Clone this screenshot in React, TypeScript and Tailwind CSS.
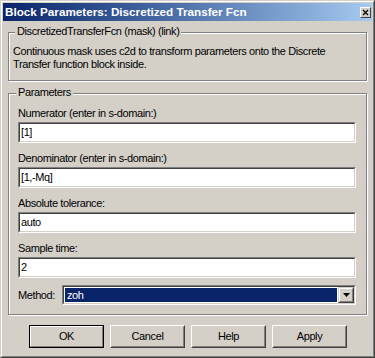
import React from "react";

function Field({ label, value }: { label: string; value: string }) {
  return (
    <div className="flex flex-col">
      <div className="h-[13px] leading-[13px] whitespace-nowrap">{label}</div>
      <div className="mt-[2px] h-[21px] border border-t-[#808080] border-l-[#808080] border-b-white border-r-white">
        <div className="h-full border border-t-[#404040] border-l-[#404040] border-b-[#d4d0c8] border-r-[#d4d0c8] bg-white flex items-center pl-[1px] leading-[13px]">
          {value}
        </div>
      </div>
    </div>
  );
}

function Btn({ label, def }: { label: string; def?: boolean }) {
  if (def) {
    return (
      <div className="w-[75px] h-[23px] border border-black">
        <div className="h-full border border-t-white border-l-white border-b-[#808080] border-r-[#808080] flex items-center justify-center leading-[13px]">
          {label}
        </div>
      </div>
    );
  }
  return (
    <div className="w-[75px] h-[23px] border border-t-white border-l-white border-b-[#404040] border-r-[#404040]">
      <div className="h-full border border-t-[#d4d0c8] border-l-[#d4d0c8] border-b-[#808080] border-r-[#808080] flex items-center justify-center leading-[13px]">
        {label}
      </div>
    </div>
  );
}

export default function App() {
  return (
    <div
      className="w-[375px] h-[358px] bg-[#d4d0c8] border border-t-[#d4d0c8] border-l-[#d4d0c8] border-b-[#404040] border-r-[#404040] text-[11px] tracking-[-0.4px] text-black"
      style={{ fontFamily: '"Liberation Sans", Arial, sans-serif' }}
    >
      <div className="h-full border border-t-white border-l-white border-b-[#808080] border-r-[#808080] p-px flex flex-col">
        {/* Title bar */}
        <div className="h-[18px] shrink-0 bg-linear-to-r from-[#0a246a] to-[#a6caf0] flex items-center justify-between">
          <span className="pl-[2px] text-white font-bold text-[11.7px] tracking-normal leading-[14px] whitespace-nowrap">
            Block Parameters: Discretized Transfer Fcn
          </span>
          <div className="mr-[1px] w-[11px] h-[11px] bg-[#d4d0c8] border border-t-white border-l-white border-b-[#404040] border-r-[#404040] flex items-center justify-center">
            <svg width="7" height="7" viewBox="0 0 7 7">
              <path d="M1 1L6 6M6 1L1 6" stroke="black" strokeWidth="1.3" />
            </svg>
          </div>
        </div>

        {/* Group 1 */}
        <div className="relative mt-[11px] mx-[5px] h-[49px] border border-[#808080] shadow-[inset_1px_1px_0_#ffffff,1px_1px_0_#ffffff] pt-[12px] pl-[4px] leading-[13px]">
          <span className="absolute left-[6px] top-[-8px] px-[2px] bg-[#d4d0c8] leading-[13px] whitespace-nowrap">
            DiscretizedTransferFcn (mask) (link)
          </span>
          <div className="whitespace-nowrap">Continuous mask uses c2d to transform parameters onto the Discrete</div>
          <div className="whitespace-nowrap">Transfer function block inside.</div>
        </div>

        {/* Group 2 */}
        <div className="relative mt-[12px] mx-[5px] h-[222px] border border-[#808080] shadow-[inset_1px_1px_0_#ffffff,1px_1px_0_#ffffff] pt-[13px] pl-[9px] pr-[10px] flex flex-col gap-[9px]">
          <span className="absolute left-[7px] top-[-8px] px-[2px] bg-[#d4d0c8] leading-[13px] whitespace-nowrap">
            Parameters
          </span>
          <Field label="Numerator (enter in s-domain:)" value="[1]" />
          <Field label="Denominator (enter in s-domain:)" value="[1,-Mq]" />
          <Field label="Absolute tolerance:" value="auto" />
          <Field label="Sample time:" value="2" />
          <div className="-mt-[2px] flex items-center">
            <div className="w-[44px] leading-[13px]">Method:</div>
            <div className="flex-1 h-[20px] border border-t-[#808080] border-l-[#808080] border-b-white border-r-white">
              <div className="h-full border border-t-[#404040] border-l-[#404040] border-b-[#d4d0c8] border-r-[#d4d0c8] bg-white flex">
                <div className="flex-1 p-px flex">
                  <div className="flex-1 bg-[#0a246a] text-white flex items-center pl-[2px] leading-[13px]">zoh</div>
                </div>
                <div className="w-[16px] h-full bg-[#d4d0c8] border border-t-[#d4d0c8] border-l-[#d4d0c8] border-b-[#404040] border-r-[#404040]">
                  <div className="h-full border border-t-white border-l-white border-b-[#808080] border-r-[#808080] flex items-center justify-center">
                    <svg width="7" height="4" viewBox="0 0 7 4">
                      <path d="M0 0H7L3.5 4Z" fill="black" />
                    </svg>
                  </div>
                </div>
              </div>
            </div>
          </div>
        </div>

        {/* Buttons */}
        <div className="mt-[10px] pl-[26px] flex gap-[6px]">
          <Btn label="OK" def />
          <Btn label="Cancel" />
          <Btn label="Help" />
          <Btn label="Apply" />
        </div>
      </div>
    </div>
  );
}
